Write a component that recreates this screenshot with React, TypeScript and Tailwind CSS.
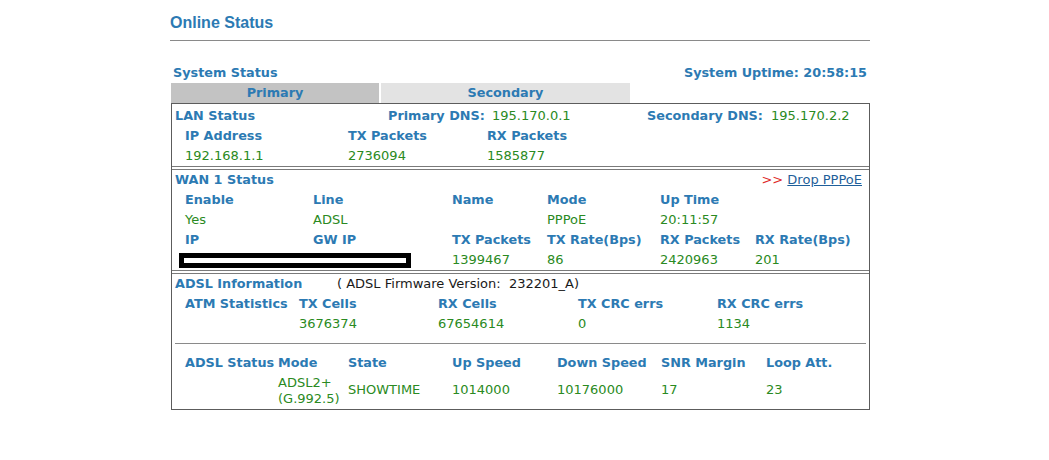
import React from "react";

const lbl = "font-bold text-[12.8px] text-[#2c7ab3]";
const val = "text-[#2a8a22]";

function Cell({ w, children, className = "" }: { w: string; children?: React.ReactNode; className?: string }) {
  return <div className={`${w} shrink-0 ${className}`}>{children}</div>;
}

export default function App() {
  return (
    <div className="min-h-[460px] bg-white pl-[170px] pt-[13px] text-[13px] leading-[20px] [font-family:'DejaVu_Sans',Verdana,sans-serif]">
      <div className="w-[700px]">
        <h1 className="text-[16px] leading-[20px] font-bold text-[#2c7ab3] [font-family:'Liberation_Sans',Arial,sans-serif]">
          Online Status
        </h1>
        <div className="mt-[7px] h-px bg-[#8a8a8a]" />

        <div className="mt-[22px] flex h-[20px] items-center justify-between pl-[3px] pr-[3px]">
          <span className={lbl}>System Status</span>
          <span className={lbl}>System Uptime: 20:58:15</span>
        </div>

        <div className="ml-px flex h-[20px] gap-[2px]">
          <div className={`w-[208px] bg-[#c3c3c3] text-center ${lbl}`}>Primary</div>
          <div className={`w-[249px] bg-[#e3e3e3] text-center ${lbl}`}>Secondary</div>
        </div>

        <div className="ml-px border border-[#5c5c5c]">
          {/* LAN */}
          <section className="border-b border-[#7a7a7a] pl-[3px] pt-[2px]">
            <div className="flex">
              <Cell w="w-[213px]" className={lbl}>LAN Status</Cell>
              <Cell w="w-[104px]" className={lbl}>Primary DNS:</Cell>
              <Cell w="w-[155px]" className={val}>195.170.0.1</Cell>
              <Cell w="w-[124px]" className={lbl}>Secondary DNS:</Cell>
              <Cell w="w-[90px]" className={val}>195.170.2.2</Cell>
            </div>
            <div className="flex pl-[10px]">
              <Cell w="w-[163px]" className={lbl}>IP Address</Cell>
              <Cell w="w-[139px]" className={lbl}>TX Packets</Cell>
              <Cell w="w-[120px]" className={lbl}>RX Packets</Cell>
            </div>
            <div className="flex pl-[10px]">
              <Cell w="w-[163px]" className={val}>192.168.1.1</Cell>
              <Cell w="w-[139px]" className={val}>2736094</Cell>
              <Cell w="w-[120px]" className={val}>1585877</Cell>
            </div>
          </section>

          {/* WAN */}
          <section className="mt-[2px] border-y border-[#7a7a7a] pl-[3px]">
            <div className="flex justify-between pr-[7px]">
              <span className={lbl}>WAN 1 Status</span>
              <span>
                <span className="text-[#e02a2a]">&gt;&gt; </span>
                <a href="#" className="text-[#1f5f9a] underline">Drop PPPoE</a>
              </span>
            </div>
            <div className="flex pl-[10px]">
              <Cell w="w-[128px]" className={lbl}>Enable</Cell>
              <Cell w="w-[139px]" className={lbl}>Line</Cell>
              <Cell w="w-[95px]" className={lbl}>Name</Cell>
              <Cell w="w-[113px]" className={lbl}>Mode</Cell>
              <Cell w="w-[95px]" className={lbl}>Up Time</Cell>
            </div>
            <div className="flex pl-[10px]">
              <Cell w="w-[128px]" className={val}>Yes</Cell>
              <Cell w="w-[139px]" className={val}>ADSL</Cell>
              <Cell w="w-[95px]" className={val}></Cell>
              <Cell w="w-[113px]" className={val}>PPPoE</Cell>
              <Cell w="w-[95px]" className={val}>20:11:57</Cell>
            </div>
            <div className="flex pl-[10px]">
              <Cell w="w-[128px]" className={lbl}>IP</Cell>
              <Cell w="w-[139px]" className={lbl}>GW IP</Cell>
              <Cell w="w-[95px]" className={lbl}>TX Packets</Cell>
              <Cell w="w-[113px]" className={lbl}>TX Rate(Bps)</Cell>
              <Cell w="w-[95px]" className={lbl}>RX Packets</Cell>
              <Cell w="w-[110px]" className={lbl}>RX Rate(Bps)</Cell>
            </div>
            <div className="flex items-center pl-[4px]">
              <Cell w="w-[273px]">
                <div className="h-[15px] w-[232px] border-[5px] border-black bg-white" />
              </Cell>
              <Cell w="w-[95px]" className={val}>1399467</Cell>
              <Cell w="w-[113px]" className={val}>86</Cell>
              <Cell w="w-[95px]" className={val}>2420963</Cell>
              <Cell w="w-[110px]" className={val}>201</Cell>
            </div>
          </section>

          {/* ADSL */}
          <section className="mt-[2px] border-t border-[#7a7a7a] pl-[3px] pr-[3px]">
            <div className="flex">
              <Cell w="w-[162px]" className={lbl}>ADSL Information</Cell>
              <span className="text-[#1a1a1a]">( ADSL Firmware Version:&nbsp;&nbsp;232201_A)</span>
            </div>
            <div className="flex pl-[10px]">
              <Cell w="w-[114px]" className={lbl}>ATM Statistics</Cell>
              <Cell w="w-[139px]" className={lbl}>TX Cells</Cell>
              <Cell w="w-[140px]" className={lbl}>RX Cells</Cell>
              <Cell w="w-[139px]" className={lbl}>TX CRC errs</Cell>
              <Cell w="w-[120px]" className={lbl}>RX CRC errs</Cell>
            </div>
            <div className="flex pl-[10px]">
              <Cell w="w-[114px]" />
              <Cell w="w-[139px]" className={val}>3676374</Cell>
              <Cell w="w-[140px]" className={val}>67654614</Cell>
              <Cell w="w-[139px]" className={val}>0</Cell>
              <Cell w="w-[120px]" className={val}>1134</Cell>
            </div>
            <div className="mt-[9px] h-px bg-[#8a8a8a]" />
            <div className="mt-[9px] flex pl-[10px]">
              <Cell w="w-[93px]" className={lbl}>ADSL Status</Cell>
              <Cell w="w-[70px]" className={lbl}>Mode</Cell>
              <Cell w="w-[104px]" className={lbl}>State</Cell>
              <Cell w="w-[105px]" className={lbl}>Up Speed</Cell>
              <Cell w="w-[104px]" className={lbl}>Down Speed</Cell>
              <Cell w="w-[105px]" className={lbl}>SNR Margin</Cell>
              <Cell w="w-[90px]" className={lbl}>Loop Att.</Cell>
            </div>
            <div className="flex items-center pb-[2px] pl-[10px]">
              <Cell w="w-[93px]" />
              <Cell w="w-[70px]" className={`${val} leading-[16px] pt-[2px]`}>
                ADSL2+<br />(G.992.5)
              </Cell>
              <Cell w="w-[104px]" className={val}>SHOWTIME</Cell>
              <Cell w="w-[105px]" className={val}>1014000</Cell>
              <Cell w="w-[104px]" className={val}>10176000</Cell>
              <Cell w="w-[105px]" className={val}>17</Cell>
              <Cell w="w-[90px]" className={val}>23</Cell>
            </div>
          </section>
        </div>
      </div>
    </div>
  );
}
